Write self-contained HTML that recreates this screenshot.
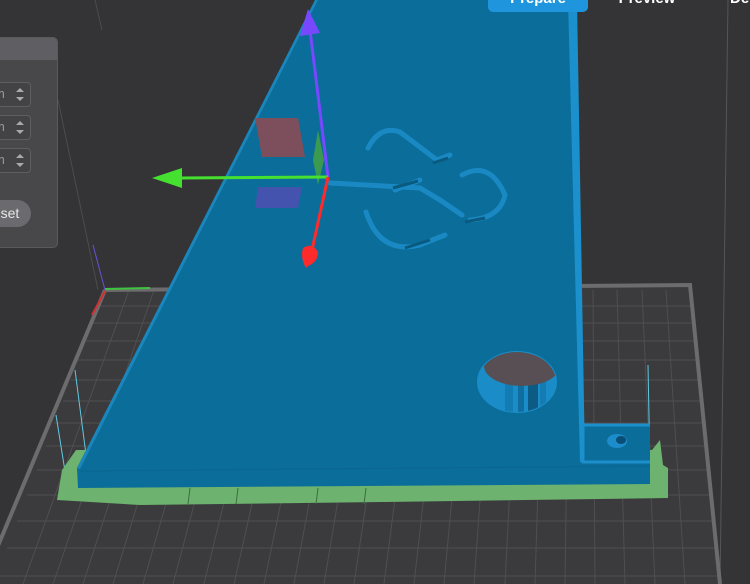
<!DOCTYPE html>
<html><head><meta charset="utf-8"><style>
html,body{margin:0;padding:0;width:750px;height:584px;overflow:hidden;background:#343436;font-family:"Liberation Sans",sans-serif}
svg{position:absolute;left:0;top:0}
.panel{position:absolute;left:-10px;top:37px;width:66px;height:209px;background:#48484b;border:1px solid #5a5a5d;border-radius:5px;overflow:hidden}
.hd{height:22px;background:#5f5f63}
.inp{position:absolute;left:-4px;width:42px;height:23px;border:1px solid #5e5e61;border-radius:4px;background:#434346;color:#9a9a9a;font-size:13px;line-height:22px}
.inp span{position:absolute;left:6px}
.inp i{position:absolute;right:6px;width:0;height:0;border-left:4px solid transparent;border-right:4px solid transparent}
.up{top:5px;border-bottom:4px solid #aaa}
.dn{top:14px;border-top:4px solid #aaa}
.btn{position:absolute;left:-6px;top:162px;width:46px;height:27px;border-radius:14px;background:#6b6b6f;color:#e6e6e6;font-size:14px;line-height:27px;text-align:right}
.tab{position:absolute;top:-8px;height:20px;font-size:15px;font-weight:bold;color:#fff;text-align:center;line-height:14px}
</style></head><body>
<svg width="750" height="584" viewBox="0 0 750 584">
<defs><clipPath id="hc"><ellipse cx="517" cy="382" rx="39" ry="30"/></clipPath></defs>
<line x1="95" y1="0" x2="102" y2="30" stroke="#4c4c4c" stroke-width="1"/>
<line x1="58" y1="100" x2="98" y2="290" stroke="#4c4c4c" stroke-width="1"/>
<line x1="728" y1="0" x2="720" y2="584" stroke="#555" stroke-width="1"/>
<polygon points="105,290 690,285 722,584 -10,584 -10,570" fill="#3b3b3e"/>
<path d="M129 290L23 584M154 290L53 584M178 290L83 584M203 290L113 584M227 290L143 584M251 290L173 584M276 290L204 584M300 290L234 584M325 290L264 584M349 290L294 584M373 290L324 584M398 290L354 584M422 290L384 584M447 290L414 584M471 290L444 584M495 290L474 584M520 290L505 584M544 290L535 584M569 290L565 584M593 290L595 584M617 290L625 584M642 290L655 584M666 290L685 584M99 306L692 306M92 323L694 323M86 341L696 341M78 360L697 360M71 380L699 380M63 401L702 401M54 423L704 423M46 446L706 446M37 470L708 470M27 495L710 495M17 521L713 521M7 548L716 548M-5 576L719 576" stroke="#4f4f52" stroke-width="1"/>
<path d="M105 290L690 285L720 584M105 290L-8 560" fill="none" stroke="#6c6c6e" stroke-width="4"/>
<line x1="105" y1="289" x2="150" y2="288" stroke="#3fc43f" stroke-width="2"/>
<line x1="105" y1="290" x2="93" y2="245" stroke="#6b4fd8" stroke-width="1"/>
<line x1="105" y1="291" x2="92" y2="315" stroke="#d03030" stroke-width="2"/>
<path d="M75 370L88 470M56 415L68 490M648 365L650 470" stroke="#5fc9e0" stroke-width="1"/>
<polygon points="76,450 585,450 652,450 660,440 663,465 668,468 668,498 385,502 140,505 57,500 62,470" fill="#6db26e"/>
<path d="M190 488L188 504M238 488L236 504M318 488L316 504M366 488L364 504" stroke="#3f6e40" stroke-width="1"/>
<polygon points="315,0 570,0 583,462 650,462 650,484 78,488 77,468" fill="#0b6d99"/>
<polygon points="568,0 577,0 585,462 580,462" fill="#1c90cc"/>
<polygon points="77,468 315,0 318,0 80,469" fill="#1a86bb"/>
<line x1="80" y1="471" x2="650" y2="466" stroke="#0a6590" stroke-width="1"/>
<rect x="583" y="425" width="67" height="38" fill="#0b6d99"/>
<path d="M583 425L650 425M583 425L583 462L650 462" stroke="#1c90cc" stroke-width="3" fill="none"/>
<ellipse cx="617" cy="441" rx="10" ry="7" fill="#1c8ccb"/>
<ellipse cx="621" cy="440" rx="5" ry="4" fill="#0a4f73"/>
<ellipse cx="517" cy="382" rx="41" ry="32" fill="#1a8cc8"/>
<g clip-path="url(#hc)">
<rect x="476" y="350" width="82" height="70" fill="#1a8cc8"/>
<rect x="505" y="360" width="8" height="60" fill="#137cb3"/>
<rect x="518" y="360" width="6" height="60" fill="#0f6e9f"/>
<rect x="528" y="360" width="10" height="60" fill="#0b5b85"/>
<rect x="540" y="360" width="6" height="60" fill="#137cb3"/>
<ellipse cx="522" cy="366" rx="38" ry="20" fill="#574f53"/>
</g>
<ellipse cx="517" cy="382" rx="41" ry="32" fill="none" stroke="#0b6d99" stroke-width="2"/>
<g fill="none" stroke="#1a89c3" stroke-width="5" stroke-linecap="round">
<path d="M368 148 Q380 125 400 132 L437 160 L450 155"/>
<path d="M366 212 Q380 255 420 245 L445 235"/>
<path d="M330 183 L420 188 L440 200 L462 215"/>
<path d="M462 175 Q490 160 505 195 Q500 218 470 220"/>
<path d="M395 190 L420 180"/>
</g>
<g stroke="#0a5a80" stroke-width="3">
<path d="M433 163L448 158M393 188L418 181M405 248L430 240M465 222L485 218"/>
</g>
<polygon points="255,118 298,118 305,157 262,157" fill="#8a4a55" opacity="0.9"/>
<polygon points="258,187 302,187 298,208 255,208" fill="#4a50b0" opacity="0.9"/>
<polygon points="318,130 324,160 318,185 313,160" fill="#3a9a50"/>
<line x1="328" y1="177" x2="310" y2="30" stroke="#7748ff" stroke-width="3"/>
<polygon points="308,9 300,36 320,33" fill="#7748ff"/>
<line x1="328" y1="177" x2="180" y2="178" stroke="#45e030" stroke-width="3"/>
<polygon points="152,178 182,168 182,188" fill="#45e030"/>
<line x1="328" y1="177" x2="312" y2="250" stroke="#ff2a2a" stroke-width="3"/>
<path d="M303 248 Q300 258 306 268 L308 266 Q318 262 318 252 Q312 242 303 248Z" fill="#ff2a2a"/>
</svg>
<div class="panel"><div class="hd"></div>
<div class="inp" style="top:44px"><span>m</span><i class="up"></i><i class="dn"></i></div>
<div class="inp" style="top:77px"><span>m</span><i class="up"></i><i class="dn"></i></div>
<div class="inp" style="top:110px"><span>m</span><i class="up"></i><i class="dn"></i></div>
<div class="btn">set&nbsp;&nbsp;&nbsp;</div>
</div>
<div class="tab" style="left:488px;width:100px;background:#1e95dd;border-radius:0 0 5px 5px;top:-8px;height:20px">Prepare</div>
<div class="tab" style="left:612px;width:70px">Preview</div>
<div class="tab" style="left:730px;width:30px;text-align:left">De</div>
</body></html>
